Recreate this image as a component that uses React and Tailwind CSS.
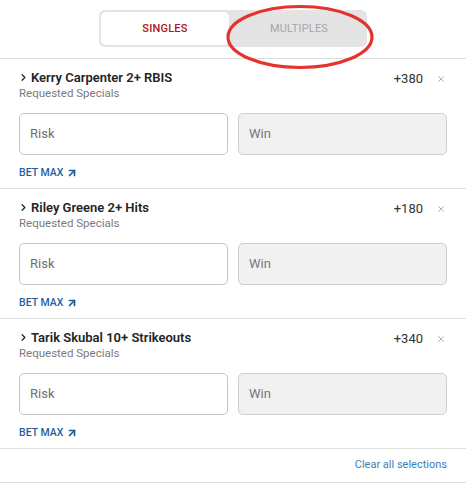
import { ArrowUpRight, ChevronRight, X } from 'lucide-react'

const bets = [
  { id: 1, name: 'Kerry Carpenter 2+ RBIS', odds: '+380' },
  { id: 2, name: 'Riley Greene 2+ Hits', odds: '+180' },
  { id: 3, name: 'Tarik Skubal 10+ Strikeouts', odds: '+340' },
]

function BetRow({ bet }) {
  return (
    <div className="border-b border-[#dedede] px-[19px] pb-[8px] pt-[10px]">
      <div className="flex items-start justify-between">
        <div>
          <div className="flex items-center gap-[2px] text-[13px] font-semibold leading-[17px] text-[#232323]">
            <ChevronRight size={11} strokeWidth={2.6} className="-ml-[1px] text-[#222]" />
            <span>{bet.name}</span>
          </div>
          <p className="text-[11.5px] leading-[15px] text-[#7a7a7a]">Requested Specials</p>
        </div>
        <div className="flex items-center gap-[13px] pr-[1px] pt-[1px]">
          <span className="text-[13px] leading-[17px] text-[#333]">{bet.odds}</span>
          <X size={10} strokeWidth={1.6} className="text-[#888]" />
        </div>
      </div>
      <div className="mt-[12px] flex gap-[10px]">
        <div className="flex h-[42px] flex-1 items-center rounded-[5px] border border-[#c4c4c4] bg-white px-[10px] text-[13px] text-[#6f6f6f]">
          Risk
        </div>
        <div className="flex h-[42px] flex-1 items-center rounded-[5px] border border-[#cfcfcf] bg-[#f1f1f1] px-[10px] text-[13px] text-[#777]">
          Win
        </div>
      </div>
      <div className="mt-[11px] flex items-center gap-[3px] text-[10.5px] font-medium leading-[14px] text-[#1b5f9f]">
        <span>BET MAX</span>
        <ArrowUpRight size={12} strokeWidth={3.4} />
      </div>
    </div>
  )
}

export default function App() {
  return (
    <div className="relative h-[500px] w-[466px] overflow-hidden bg-white" style={{ fontFamily: 'Roboto, "Noto Sans", sans-serif' }}>
      <div className="flex h-[59px] items-start justify-center border-b border-[#dedede] pt-[10px]">
        <div className="flex h-[37px] w-[268px] rounded-[6px] bg-[#e4e4e4] p-[2px]">
          <div className="flex w-[128px] items-center justify-center rounded-[5px] bg-white pt-[2px] text-[11px] font-medium tracking-[0.2px] text-[#b0151f]">
            SINGLES
          </div>
          <div className="flex flex-1 items-center justify-center pl-[4px] pt-[2px] text-[11px] tracking-[0.2px] text-[#a6a6a6]">
            MULTIPLES
          </div>
        </div>
      </div>
      {bets.map((bet) => (
        <BetRow key={bet.id} bet={bet} />
      ))}
      <div className="flex h-[34px] items-center justify-end border-b border-[#dedede] pr-[19px] text-[11px] text-[#3d7db6]">
        Clear all selections
      </div>
      {/* annotation ellipse drawn over the toggle */}
      <svg className="pointer-events-none absolute left-[225px] top-[4px]" width="150" height="66" viewBox="0 0 150 66">
        <ellipse cx="75" cy="33" rx="72" ry="30.5" fill="none" stroke="#e5322b" strokeWidth="3.2" />
      </svg>
    </div>
  )
}
